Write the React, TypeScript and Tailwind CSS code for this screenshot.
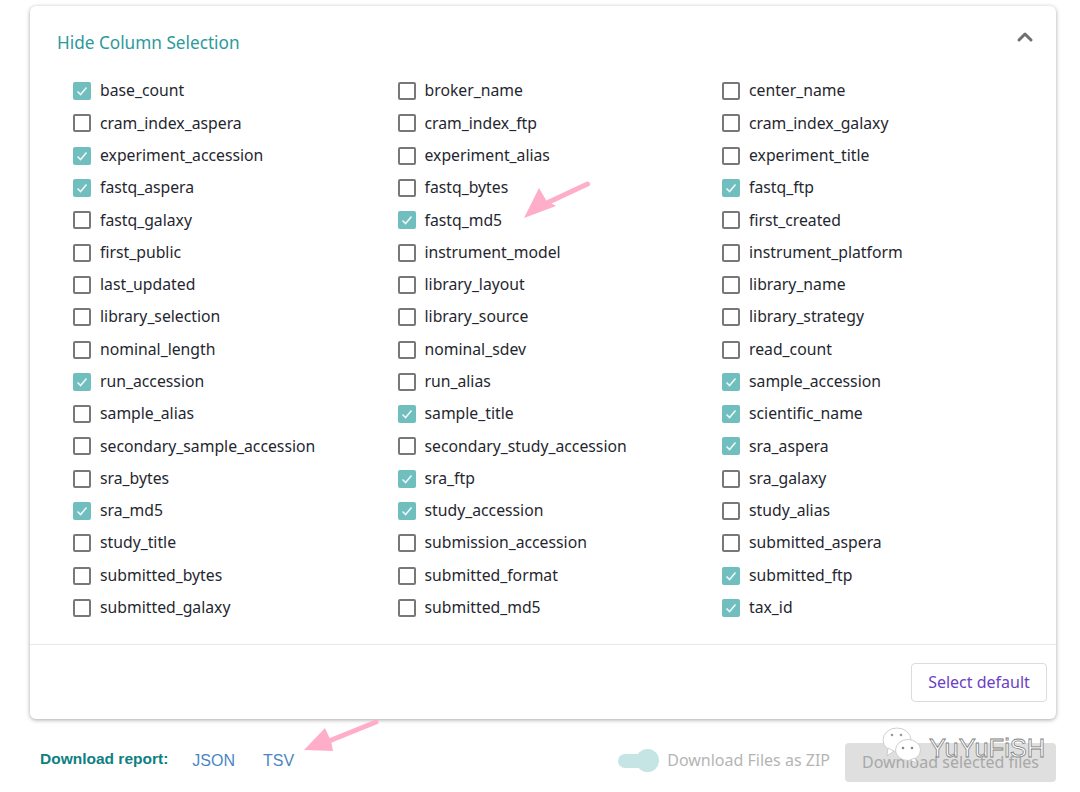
import React from 'react';
import { ChevronUp } from 'lucide-react';

const columns: [string, boolean][] = [
  ['base_count', true], ['broker_name', false], ['center_name', false],
  ['cram_index_aspera', false], ['cram_index_ftp', false], ['cram_index_galaxy', false],
  ['experiment_accession', true], ['experiment_alias', false], ['experiment_title', false],
  ['fastq_aspera', true], ['fastq_bytes', false], ['fastq_ftp', true],
  ['fastq_galaxy', false], ['fastq_md5', true], ['first_created', false],
  ['first_public', false], ['instrument_model', false], ['instrument_platform', false],
  ['last_updated', false], ['library_layout', false], ['library_name', false],
  ['library_selection', false], ['library_source', false], ['library_strategy', false],
  ['nominal_length', false], ['nominal_sdev', false], ['read_count', false],
  ['run_accession', true], ['run_alias', false], ['sample_accession', true],
  ['sample_alias', false], ['sample_title', true], ['scientific_name', true],
  ['secondary_sample_accession', false], ['secondary_study_accession', false], ['sra_aspera', true],
  ['sra_bytes', false], ['sra_ftp', true], ['sra_galaxy', false],
  ['sra_md5', true], ['study_accession', true], ['study_alias', false],
  ['study_title', false], ['submission_accession', false], ['submitted_aspera', false],
  ['submitted_bytes', false], ['submitted_format', false], ['submitted_ftp', true],
  ['submitted_galaxy', false], ['submitted_md5', false], ['tax_id', true],
];

const Checkbox: React.FC<{ checked: boolean }> = ({ checked }) =>
  checked ? (
    <span className="w-[18px] h-[18px] rounded-[2px] bg-[#70bfbe] flex items-center justify-center">
      <svg width="14" height="14" viewBox="0 0 14 14" fill="none" stroke="#eef8f8" strokeWidth="1.6">
        <path d="M2.5 7.5 5.6 10.5 11.5 3.6" />
      </svg>
    </span>
  ) : (
    <span className="w-[18px] h-[18px] rounded-[2px] border-2 border-[#787878] bg-white" />
  );

const App: React.FC = () => {
  return (
    <div className="relative w-[1080px] h-[792px] overflow-hidden bg-white font-['Noto_Sans',sans-serif]">
      <div className="pt-[6px] pl-[30px]">
        <div className="w-[1026px] h-[713px] rounded-[6px] bg-white shadow-[0_1px_4px_rgba(0,0,0,0.35)] flex flex-col">
          <div className="h-[69px] pl-[27px] pr-[19px] flex items-start justify-between">
            <span className="mt-[25px] text-[17.2px] leading-[24px] text-[#2c9a9b]">Hide Column Selection</span>
            <ChevronUp className="mt-[19px] text-[#6f6f6f]" size={24} strokeWidth={3} />
          </div>
          <div className="pl-[43px] grid grid-cols-[324.5px_324.5px_1fr] auto-rows-[32.31px]">
            {columns.map(([name, checked]) => (
              <label key={name} className="flex items-center gap-[9px] text-[15.75px] text-[#1f2730]">
                <Checkbox checked={checked} />
                <span>{name}</span>
              </label>
            ))}
          </div>
          <div className="mt-[20px] border-t border-[#e8e8e8] flex justify-end pt-[18px] pr-[9px]">
            <button className="w-[136px] h-[39px] rounded-[4px] border border-[#dcdcdc] bg-white text-[16px] leading-[36px] pb-[2px] text-[#6a3fc4]">
              Select default
            </button>
          </div>
        </div>
      </div>

      <div className="mt-[24px] pl-[40px] pr-[24px] flex items-start">
        <span className="mt-[6px] font-['Liberation_Sans',sans-serif] font-bold text-[15.5px] leading-[20px] text-[#0e7f83]">
          Download report:
        </span>
        <a className="ml-[24px] mt-[8px] font-['Liberation_Sans',sans-serif] text-[16px] leading-[20px] text-[#4a86c5]">JSON</a>
        <a className="ml-[28px] mt-[8px] font-['Liberation_Sans',sans-serif] text-[16px] leading-[20px] text-[#4a86c5]">TSV</a>
        <div className="ml-auto flex items-start">
          <div className="relative w-[41px] h-[24px] mt-[6px]">
            <div className="mt-[5px] w-[36px] h-[14px] rounded-full bg-[#c5e5e5]" />
            <div className="absolute right-0 top-0 w-[23px] h-[23px] rounded-full bg-[#c5e5e5]" />
          </div>
          <span className="ml-[8px] mt-[5px] text-[16px] leading-[24px] text-[#b5b5b5]">Download Files as ZIP</span>
          <button className="ml-[15px] w-[211px] h-[39px] rounded-[4px] bg-[#dfdfdf] text-[16px] leading-[36px] pb-[1px] text-[#a8a8a8]">
            Download selected files
          </button>
        </div>
      </div>

      {/* pink annotation arrows */}
      <svg className="absolute left-[500px] top-[170px]" width="100" height="60" viewBox="0 0 100 60" fill="#ffaeca">
        <path d="M87.500 14 L49 32" stroke="#ffaeca" strokeWidth="5" strokeLinecap="round" />
        <path d="M24 48 L39 18 L46 30 L56 36 Z" />
      </svg>
      <svg className="absolute left-[295px] top-[710px]" width="90" height="50" viewBox="0 0 90 50" fill="#ffaeca">
        <path d="M81 12 L34 31" stroke="#ffaeca" strokeWidth="5" strokeLinecap="round" />
        <path d="M9 40 L30 18 L36 31 L38 41 Z" />
      </svg>

      {/* wechat watermark */}
      <div className="absolute left-[882px] top-[727px] flex items-center gap-[7px]">
        <svg width="40" height="36" viewBox="0 0 40 36" fill="#ffffff" stroke="#c4c4c4" strokeWidth="0.8">
          <ellipse cx="15" cy="13" rx="14" ry="12" />
          <path d="M6 21 L5 29 L12 24 Z" />
          <ellipse cx="26" cy="23" rx="12.500" ry="10.500" />
          <path d="M33 31 L35 36 L28 33 Z" />
          <circle cx="10" cy="8" r="1.300" fill="#999" stroke="none" />
          <circle cx="19" cy="8" r="1.300" fill="#999" stroke="none" />
          <circle cx="21" cy="21" r="1.300" fill="#888" stroke="none" />
          <circle cx="30" cy="21" r="1.300" fill="#888" stroke="none" />
        </svg>
        <span className="mt-[5px] font-['Liberation_Sans',sans-serif] text-[25.500px] leading-[30px] text-white [-webkit-text-stroke:0.8px_#808080]">
          YuYuFiSH
        </span>
      </div>
    </div>
  );
};

export default App;
